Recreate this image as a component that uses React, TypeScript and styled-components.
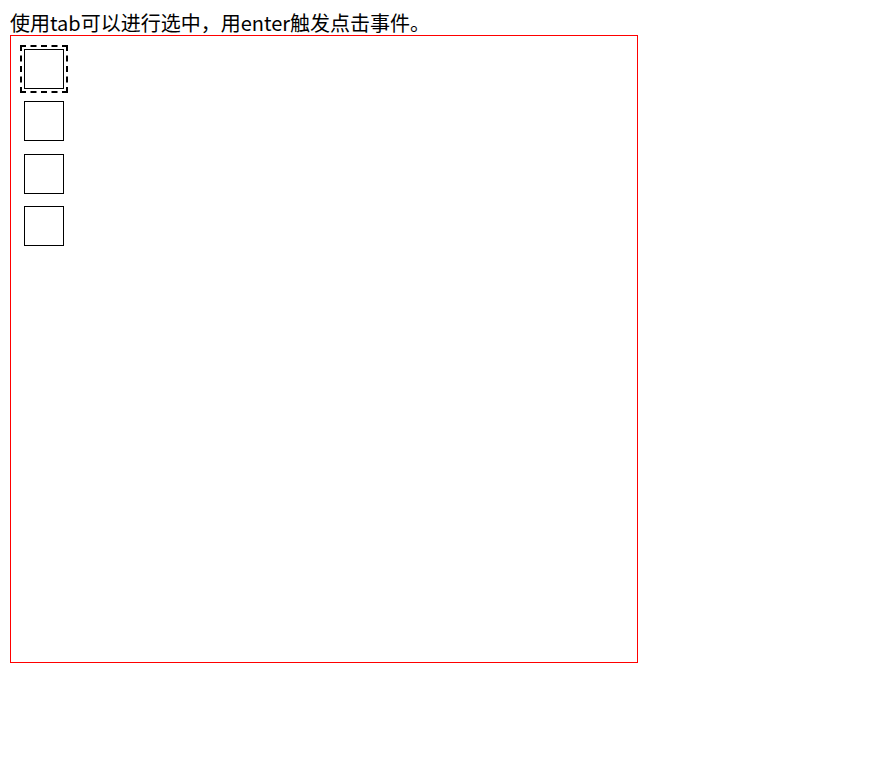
import { useState, useRef, useEffect, KeyboardEvent } from 'react'
import styled, { createGlobalStyle } from 'styled-components'

const GlobalStyle = createGlobalStyle`
  body {
    margin: 10px;
    background: #fff;
    color: #000;
    font-family: "Noto Sans CJK SC", "Noto Sans", sans-serif;
  }
`;

const Hint = styled.div`
  font-size: 20px;
  line-height: 25px;
  height: 25px;
  white-space: nowrap;
`;

const Board = styled.div`
  box-sizing: border-box;
  width: 628px;
  height: 628px;
  border: 1px solid red;
  padding: 13px;
  display: flex;
  flex-direction: column;
  align-items: flex-start;
  gap: 12.4px;
`;

const Cell = styled.div<{ $focused: boolean }>`
  box-sizing: border-box;
  width: 40px;
  height: 40px;
  border: 1px solid #000;
  background: #fff;
  outline: ${p => (p.$focused ? '2px dashed #000' : 'none')};
  outline-offset: 2px;
  cursor: pointer;
`;

const items = [1, 2, 3, 4]

export default function App() {
  const [focused, setFocused] = useState(0);
  const refs = useRef<(HTMLDivElement | null)[]>([]);

  useEffect(() => {
    refs.current[0]?.focus();
  }, []);

  const onKey = (e: KeyboardEvent<HTMLDivElement>, i: number) => {
    if (e.key === 'Enter') {
      refs.current[i]?.click();
    }
  };

  return (
    <>
      <GlobalStyle />
      <Hint>使用tab可以进行选中，用enter触发点击事件。</Hint>
      <Board>
        {items.map((n, i) => (
          <Cell
            key={n}
            ref={el => { refs.current[i] = el; }}
            tabIndex={0}
            $focused={focused === i}
            onFocus={() => setFocused(i)}
            onKeyDown={e => onKey(e, i)}
            onClick={() => setFocused(i)}
          />
        ))}
      </Board>
    </>
  )
}
